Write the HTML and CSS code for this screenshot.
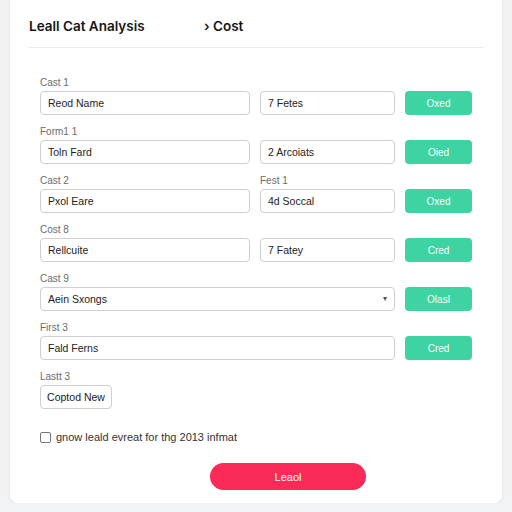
FILE: index.html
```html
<!DOCTYPE html>
<html>
<head>
<meta charset="utf-8">
<link rel="stylesheet" href="styles.css">
</head>
<body>
<div class="card">
  <div class="header">
    <span class="title">Leall Cat Analysis</span>
    <span class="crumb">› Cost</span>
  </div>
  <div class="form">
    <div class="row">
      <label class="lbl c1">Cast 1</label>
      <div class="field c1">Reod Name</div>
      <div class="field c2">7 Fetes</div>
      <button class="btn c3">Oxed</button>
    </div>
    <div class="row">
      <label class="lbl c1">Form1 1</label>
      <div class="field c1">Toln Fard</div>
      <div class="field c2">2 Arcoiats</div>
      <button class="btn c3">Oied</button>
    </div>
    <div class="row">
      <label class="lbl c1">Cast 2</label>
      <label class="lbl c2">Fest 1</label>
      <div class="field c1">Pxol Eare</div>
      <div class="field c2">4d Soccal</div>
      <button class="btn c3">Oxed</button>
    </div>
    <div class="row">
      <label class="lbl c1">Cost 8</label>
      <div class="field c1">Rellcuite</div>
      <div class="field c2">7 Fatey</div>
      <button class="btn c3">Cred</button>
    </div>
    <div class="row">
      <label class="lbl c1">Cast 9</label>
      <div class="field c12 select">Aein Sxongs<span class="caret">▾</span></div>
      <button class="btn c3">Olasl</button>
    </div>
    <div class="row">
      <label class="lbl c1">First 3</label>
      <div class="field c12">Fald Ferns</div>
      <button class="btn c3">Cred</button>
    </div>
    <div class="row">
      <label class="lbl c1">Lastt 3</label>
      <button class="outline c1">Coptod New</button>
    </div>
    <div class="check">
      <span class="box"></span>
      <span class="check-text">gnow leald evreat for thg 2013 infmat</span>
    </div>
    <div class="submit-wrap">
      <button class="submit">Leaol</button>
    </div>
  </div>
</div>
</body>
</html>
```
FILE: styles.css
```css
html, body {
  margin: 0;
  padding: 0;
  background: #f2f3f4;
  font-family: "Liberation Sans", Arial, sans-serif;
}
.card {
  margin: -10px 10px 0;
  width: 492px;
  height: 513px;
  box-sizing: border-box;
  background: #ffffff;
  border-radius: 8px;
  box-shadow: 0 1px 4px rgba(0, 0, 0, 0.06);
  padding: 20px 18px 0;
}
.header {
  display: flex;
  align-items: baseline;
  padding: 8px 0 0 1px;
  box-sizing: border-box;
  border-bottom: 1px solid #ececec;
  height: 38px;
}
.title {
  font-family: Inter, "Liberation Sans", sans-serif;
  font-weight: 600;
  font-size: 13.5px;
  color: #151515;
  width: 175px;
}
.crumb {
  font-family: Inter, "Liberation Sans", sans-serif;
  font-weight: 600;
  font-size: 13.5px;
  color: #151515;
}
.form {
  padding: 29px 12px 0;
}
.row {
  display: grid;
  grid-template-columns: 210px 135px 67px;
  column-gap: 10px;
  row-gap: 3px;
  margin-bottom: 11px;
}
.lbl {
  font-size: 10px;
  line-height: 11px;
  color: #6b6b6b;
  grid-row: 1;
}
.c1 { grid-column: 1; }
.c2 { grid-column: 2; }
.c3 { grid-column: 3; }
.c12 { grid-column: 1 / 3; }
.field {
  grid-row: 2;
  height: 24px;
  box-sizing: border-box;
  border: 1px solid #cfcfcf;
  border-radius: 4px;
  padding: 0 7px;
  font-size: 10.5px;
  line-height: 22px;
  color: #222;
  background: #fff;
}
.select {
  display: flex;
  justify-content: space-between;
}
.caret {
  font-size: 8px;
  color: #555;
}
.btn {
  grid-row: 2;
  height: 24px;
  border: none;
  border-radius: 4px;
  background: #3dd3a3;
  color: #fff;
  font-family: "Liberation Sans", Arial, sans-serif;
  font-size: 10px;
  padding: 0;
}
.outline {
  grid-row: 2;
  width: 72px;
  height: 24px;
  border: 1px solid #cfcfcf;
  border-radius: 4px;
  background: #fff;
  color: #222;
  font-family: "Liberation Sans", Arial, sans-serif;
  font-size: 10.5px;
  padding: 0;
}
.check {
  display: flex;
  align-items: center;
  gap: 5px;
  margin-top: 22px;
}
.box {
  width: 11px;
  height: 11px;
  box-sizing: border-box;
  border: 1px solid #777;
  border-radius: 2px;
}
.check-text {
  font-size: 11px;
  color: #333;
}
.submit-wrap {
  padding: 20px 0 0 170px;
}
.submit {
  width: 156px;
  height: 27px;
  border: none;
  border-radius: 14px;
  background: #fb2a56;
  color: #fff;
  font-family: "Liberation Sans", Arial, sans-serif;
  font-size: 11px;
  padding: 0;
}
```
